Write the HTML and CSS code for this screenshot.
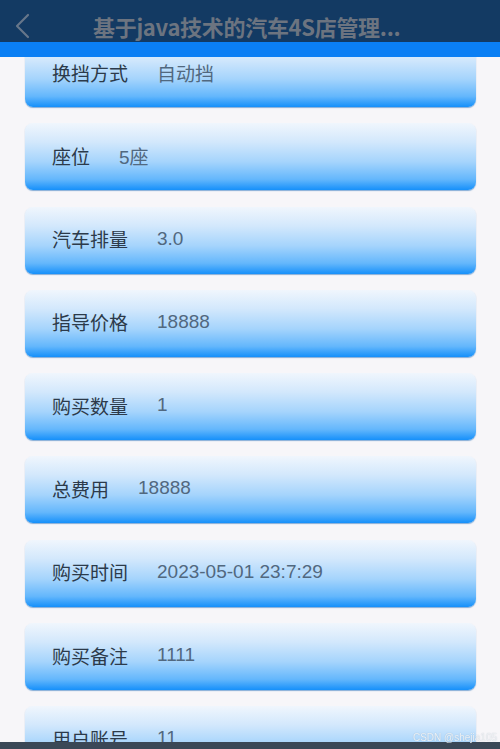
FILE: index.html
```html
<!DOCTYPE html>
<html lang="zh-CN">
<head>
<meta charset="utf-8">
<title>详情</title>
<link rel="stylesheet" href="styles.css">
</head>
<body>
<header class="topbar">
  <div class="nav">
    <svg class="back" width="20" height="26" viewBox="0 0 20 26"><path d="M15 2 L4 13 L15 24" fill="none" stroke="#66768a" stroke-width="2.2" stroke-linecap="round" stroke-linejoin="round"/></svg>
    <div class="title">基于java技术的汽车4S店管理...</div>
  </div>
  <div class="band"></div>
</header>
<main class="list">
  <div class="card"><span class="label">换挡方式</span><span class="value">自动挡</span></div>
  <div class="card"><span class="label">座位</span><span class="value">5座</span></div>
  <div class="card"><span class="label">汽车排量</span><span class="value">3.0</span></div>
  <div class="card"><span class="label">指导价格</span><span class="value">18888</span></div>
  <div class="card"><span class="label">购买数量</span><span class="value">1</span></div>
  <div class="card"><span class="label">总费用</span><span class="value">18888</span></div>
  <div class="card"><span class="label">购买时间</span><span class="value">2023-05-01 23:7:29</span></div>
  <div class="card"><span class="label">购买备注</span><span class="value">1111</span></div>
  <div class="card"><span class="label">用户账号</span><span class="value">11</span></div>
</main>
<div class="bottombar"></div>
<div class="watermark">CSDN @shejia105</div>
</body>
</html>
```
FILE: styles.css
```css
html, body {
  margin: 0;
  padding: 0;
}
body {
  background: #f7f6f9;
  font-family: "Liberation Sans", "Noto Sans CJK SC", sans-serif;
  width: 500px;
  height: 749px;
  overflow: hidden;
}
.topbar {
  position: fixed;
  top: 0;
  left: 0;
  width: 500px;
  z-index: 5;
}
.nav {
  height: 42px;
  background: #133a63;
  display: flex;
  align-items: flex-start;
}
.back {
  margin-left: 13px;
  margin-top: 13px;
}
.title {
  margin-left: 60px;
  font-family: "Noto Sans CJK SC", sans-serif;
  font-weight: 700;
  font-size: 22px;
  color: #6c7480;
  letter-spacing: -0.3px;
  line-height: 32px;
  margin-top: 10px;
}
.band {
  height: 15px;
  background: #0b7ff4;
}
.list {
  padding: 40px 24px 0 25px;
  display: flex;
  flex-direction: column;
  gap: 16.3px;
}
.card {
  height: 67px;
  box-sizing: border-box;
  padding-bottom: 3px;
  border-radius: 8px;
  background: linear-gradient(to bottom, #f0f6fd 0%, #d3e8fc 28%, #a5d4fc 58%, #64b7fc 84%, #1690fa 100%);
  box-shadow: 0 1px 1px rgba(20, 100, 180, 0.5);
  display: flex;
  align-items: center;
  padding-left: 27px;
  font-size: 19px;
}
.label {
  color: #2c3a4a;
  font-family: "Noto Sans CJK SC", sans-serif;
  margin-right: 29px;
}
.value {
  color: #51687f;
  font-family: "Liberation Sans", "Noto Sans CJK SC", sans-serif;
}
.bottombar {
  position: fixed;
  left: 0;
  bottom: 0;
  width: 500px;
  height: 7px;
  background: #3a4857;
  z-index: 6;
}
.watermark {
  position: fixed;
  right: 3px;
  bottom: 6px;
  font-size: 10px;
  color: rgba(255, 255, 255, 0.8);
  text-shadow: 0 0 1px rgba(120, 140, 160, 0.6);
  z-index: 7;
  font-family: "Liberation Sans", sans-serif;
}
```
